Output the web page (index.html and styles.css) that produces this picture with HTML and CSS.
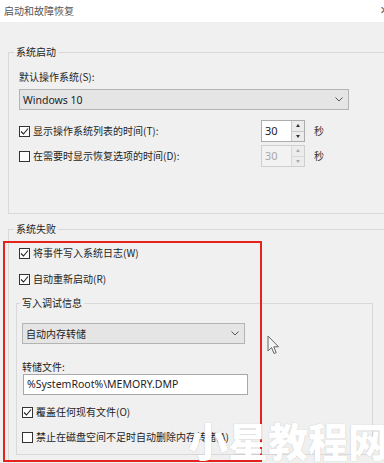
FILE: index.html
```html
<!DOCTYPE html>
<html lang="zh-CN">
  <head>
    <meta charset="UTF-8" />
    <meta name="viewport" content="width=device-width, initial-scale=1.0" />
    <title>启动和故障恢复</title>
    <link rel="stylesheet" href="styles.css">
  </head>
  <body>
    <div class="titlebar">
      <span class="titlebar-text">启动和故障恢复</span>
      <span class="titlebar-close">✕</span>
    </div>

    <fieldset class="group group-outer">
      <legend class="group-title">系统启动</legend>
      <div class="field-label">默认操作系统(S):</div>
      <div class="select select-os">
        <span class="select-value">Windows 10</span>
        <svg class="select-arrow" width="8" height="5" viewBox="0 0 8 5"><path d="M0.5 0.5 L4 4 L7.5 0.5" fill="none" stroke="#555" stroke-width="1"/></svg>
      </div>

      <div class="spin-row">
        <label class="check-row">
          <span class="check checked"><svg width="9" height="9" viewBox="0 0 9 9"><path d="M1 4.5 L3.5 7 L8 1.5" fill="none" stroke="#222" stroke-width="1.1"/></svg></span>
          显示操作系统列表的时间(T):
        </label>
        <div class="spin">
          <span class="spin-value">30</span>
          <span class="spin-btns">
            <span class="spin-btn"><i class="tri-up"></i></span>
            <span class="spin-btn"><i class="tri-down"></i></span>
          </span>
        </div>
        <span class="unit">秒</span>
      </div>

      <div class="spin-row spin-row-2">
        <label class="check-row">
          <span class="check"></span>
          在需要时显示恢复选项的时间(D):
        </label>
        <div class="spin disabled">
          <span class="spin-value">30</span>
          <span class="spin-btns">
            <span class="spin-btn"><i class="tri-up"></i></span>
            <span class="spin-btn"><i class="tri-down"></i></span>
          </span>
        </div>
        <span class="unit">秒</span>
      </div>
    </fieldset>

    <fieldset class="group group-outer group-fail">
      <legend class="group-title">系统失败</legend>
      <label class="check-row first-check">
        <span class="check checked"><svg width="9" height="9" viewBox="0 0 9 9"><path d="M1 4.5 L3.5 7 L8 1.5" fill="none" stroke="#222" stroke-width="1.1"/></svg></span>
        将事件写入系统日志(W)
      </label>
      <label class="check-row next-check">
        <span class="check checked"><svg width="9" height="9" viewBox="0 0 9 9"><path d="M1 4.5 L3.5 7 L8 1.5" fill="none" stroke="#222" stroke-width="1.1"/></svg></span>
        自动重新启动(R)
      </label>

      <fieldset class="group group-inner">
        <legend class="group-title">写入调试信息</legend>
        <div class="select select-dump">
          <span class="select-value">自动内存转储</span>
          <svg class="select-arrow" width="8" height="5" viewBox="0 0 8 5"><path d="M0.5 0.5 L4 4 L7.5 0.5" fill="none" stroke="#555" stroke-width="1"/></svg>
        </div>
        <div class="field-label dump-label">转储文件:</div>
        <div class="textbox">%SystemRoot%\MEMORY.DMP</div>
        <label class="check-row overwrite-check">
          <span class="check checked"><svg width="9" height="9" viewBox="0 0 9 9"><path d="M1 4.5 L3.5 7 L8 1.5" fill="none" stroke="#222" stroke-width="1.1"/></svg></span>
          覆盖任何现有文件(O)
        </label>
        <label class="check-row next-check">
          <span class="check"></span>
          禁止在磁盘空间不足时自动删除内存转储(A)
        </label>
      </fieldset>
    </fieldset>

    <!-- 标注框 / 鼠标 / 水印 -->
    <div class="highlight-box"></div>
    <svg class="cursor" width="13" height="20" viewBox="0 0 13 20">
      <path d="M1 1 L1 16 L4.5 12.5 L7 18.5 L9.2 17.6 L6.8 11.8 L11.5 11.8 Z" fill="#f4f4f4" stroke="#666" stroke-width="1" stroke-linejoin="round"/>
    </svg>
    <div class="watermark">小星教程网</div>
  </body>
</html>
```

FILE: styles.css
```css
body {
  position: relative;
  margin: 0;
  width: 384px;
  height: 463px;
  overflow: hidden;
  background-color: #f0f0f0;
  font-family: "Noto Sans CJK SC", "Noto Sans", sans-serif;
  font-size: 10px;
  line-height: 14px;
  color: #1e1e1e;
}

.titlebar {
  display: flex;
  align-items: center;
  height: 22px;
  padding-left: 4px;
  background-color: #ffffff;
  color: #555;
}
.titlebar-close {
  margin-left: auto;
  margin-right: -5px;
  font-family: "DejaVu Sans", sans-serif;
  font-size: 11px;
  color: #555;
}

/* 分组框 */
.group {
  min-width: 0;
  border: 1px solid #d9d9d9;
}
.group-outer {
  width: 400px;
  box-sizing: border-box;
  margin: 23px 0 0 8px;
  padding: 0 10px 46px;
}
.group-title {
  padding: 0 2px;
  margin-left: -5px;
  color: #222;
}
.group-fail {
  margin-top: 8px;
  padding-bottom: 40px;
}
.group-inner {
  width: 357px;
  box-sizing: border-box;
  margin: 10px 0 0 -3px;
  padding: 0 5px 10px;
}
.group-inner .group-title {
  margin-left: -2px;
}

.field-label {
  margin-top: 11px;
}

/* 下拉框 */
.select {
  display: flex;
  align-items: center;
  justify-content: space-between;
  height: 21px;
  box-sizing: border-box;
  padding: 0 5px 0 3px;
  background-color: #e5e5e5;
  border: 1px solid #b4b4b4;
}
.select-os {
  width: 330px;
  margin-top: 5px;
}
.select-os .select-value {
  font-family: "Noto Sans", sans-serif;
  font-size: 10.5px;
}
.select-dump {
  width: 223px;
  margin-top: 13px;
}

/* 复选框 */
.check-row {
  display: flex;
  align-items: center;
  gap: 3px;
  white-space: nowrap;
}
.check {
  display: inline-flex;
  align-items: center;
  justify-content: center;
  width: 11px;
  height: 11px;
  box-sizing: border-box;
  border: 1px solid #333;
  background-color: #fdfdfd;
  flex-shrink: 0;
}
.first-check {
  margin-top: 10px;
}
.next-check {
  margin-top: 11px;
}
.group-fail > .next-check {
  margin-top: 12px;
}
.overwrite-check {
  margin-top: 10px;
}

/* 数字框 */
.spin-row {
  display: grid;
  grid-template-columns: 233px 44px auto;
  column-gap: 9px;
  align-items: center;
  margin-top: 10px;
}
.spin-row-2 {
  margin-top: 3px;
}
.spin {
  display: flex;
  height: 22px;
  box-sizing: border-box;
  border: 1px solid #acacac;
  background-color: #ffffff;
}
.spin-value {
  flex: 1;
  padding-left: 3px;
  font-family: "Noto Sans", sans-serif;
  font-size: 11px;
  line-height: 20px;
  color: #222;
}
.spin-btns {
  display: flex;
  flex-direction: column;
  width: 12px;
  border-left: 1px solid #c8c8c8;
}
.spin-btn {
  flex: 1;
  display: flex;
  align-items: center;
  justify-content: center;
  background-color: #ececec;
}
.spin-btn + .spin-btn {
  border-top: 1px solid #c8c8c8;
}
.tri-up,
.tri-down {
  width: 0;
  height: 0;
  border-left: 2.5px solid transparent;
  border-right: 2.5px solid transparent;
}
.tri-up {
  border-bottom: 3px solid #333;
}
.tri-down {
  border-top: 3px solid #333;
}
.spin.disabled {
  background-color: #f2f2f2;
  border-color: #cfcfcf;
}
.spin.disabled .spin-value {
  color: #a8a8a8;
}
.spin.disabled .spin-btns,
.spin.disabled .spin-btn + .spin-btn {
  border-color: #d8d8d8;
}
.spin.disabled .tri-up {
  border-bottom-color: #aaa;
}
.spin.disabled .tri-down {
  border-top-color: #aaa;
}
.unit {
  color: #333;
}

/* 转储文件 */
.dump-label {
  margin-top: 16px;
}
.textbox {
  width: 225px;
  height: 21px;
  box-sizing: border-box;
  margin-left: 1px;
  padding-left: 3px;
  border: 1px solid #a8a8a8;
  background-color: #ffffff;
  font-family: "Noto Sans", sans-serif;
  font-size: 10.5px;
  line-height: 19px;
}

/* 覆盖层 */
.highlight-box {
  position: absolute;
  left: 3px;
  top: 241px;
  width: 259px;
  height: 221px;
  box-sizing: border-box;
  border: 2px solid #e5221d;
}
.cursor {
  position: absolute;
  left: 267px;
  top: 335px;
}
.watermark {
  position: absolute;
  left: 188px;
  top: 420px;
  font-size: 40px;
  line-height: 40px;
  font-weight: 900;
  color: #ffffff;
  white-space: nowrap;
  text-shadow: 0 0 1px rgba(0, 0, 0, 0.25);
}
```
